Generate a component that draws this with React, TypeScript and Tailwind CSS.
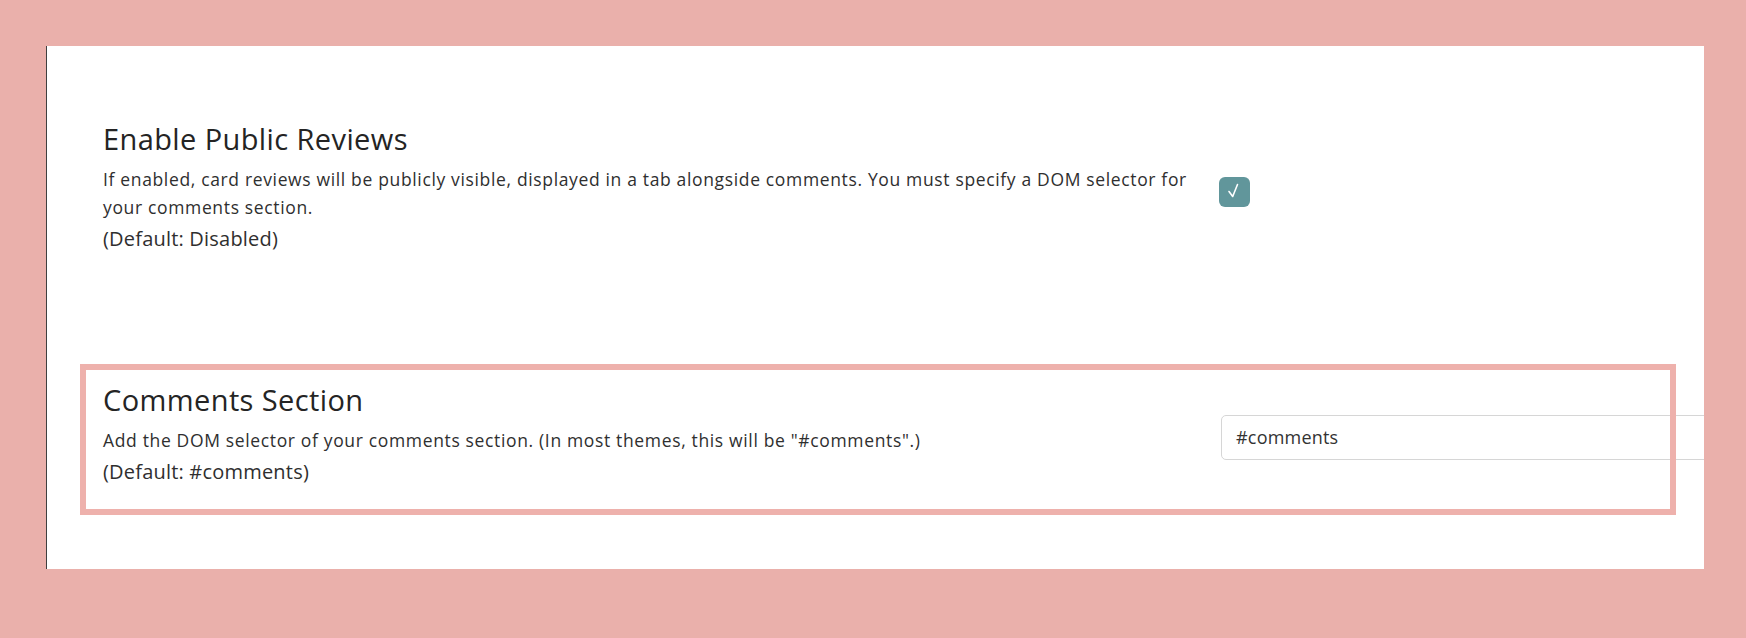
import React from "react";

const SettingRow = ({
  title,
  lines,
  defaultText,
  control,
  controlOffset,
}: {
  title: string;
  lines: string;
  defaultText: string;
  control: React.ReactNode;
  controlOffset: string;
}) => {
  return (
    <div className="flex">
      <div className="w-[1100px] shrink-0">
        <h2 className="text-[29px] leading-[34px] font-medium tracking-[0.4px] text-[#242424]">{title}</h2>
        <p className="mt-[9px] text-[17.5px] leading-[28px] tracking-[0.65px] text-[#2f2f2f]">{lines}</p>
        <p className="mt-[4px] text-[20px] leading-[28px] tracking-[0.2px] text-[#2f2f2f]">{defaultText}</p>
      </div>
      <div className={`ml-[16px] ${controlOffset}`}>{control}</div>
    </div>
  );
};

const CheckBox = () => (
  <div className="flex h-[30px] w-[31px] items-center justify-center rounded-[6px] bg-[#61969b]">
    <svg width="31" height="30" viewBox="0 0 31 30" fill="none">
      <polyline
        points="10,14.5 13.7,19.5 18.5,7.5"
        stroke="white"
        strokeWidth="1.6"
        strokeLinecap="round"
        strokeLinejoin="round"
      />
    </svg>
  </div>
);

const SelectorInput = () => (
  <div className="ml-[2px] flex h-[45px] w-[600px] items-center rounded-[5px] border border-[#d6d6d6] bg-white pl-[14px] text-[18px] tracking-[0.2px] text-[#333]">
    #comments
  </div>
);

export default function App() {
  return (
    <div className="min-h-[638px] w-full bg-[#eab0ab] pl-[46px] pr-[42px] pt-[46px] font-[family-name:'Open_Sans',sans-serif]">
      <div className="h-[523px] overflow-hidden border-l border-[#3f3f3f] bg-white pl-[56px] pt-[76px]">
        <SettingRow
          title="Enable Public Reviews"
          lines="If enabled, card reviews will be publicly visible, displayed in a tab alongside comments. You must specify a DOM selector for your comments section."
          defaultText="(Default: Disabled)"
          control={<CheckBox />}
          controlOffset="mt-[55px]"
        />
        <div className="relative mt-[130px]">
          <SettingRow
            title="Comments Section"
            lines={'Add the DOM selector of your comments section. (In most themes, this will be "#comments".)'}
            defaultText="(Default: #comments)"
            control={<SelectorInput />}
            controlOffset="mt-[32px]"
          />
          <div className="pointer-events-none absolute left-[-23px] top-[-19px] h-[151px] w-[1596px] border-[6px] border-[#eeb1ac]" />
        </div>
      </div>
    </div>
  );
}
